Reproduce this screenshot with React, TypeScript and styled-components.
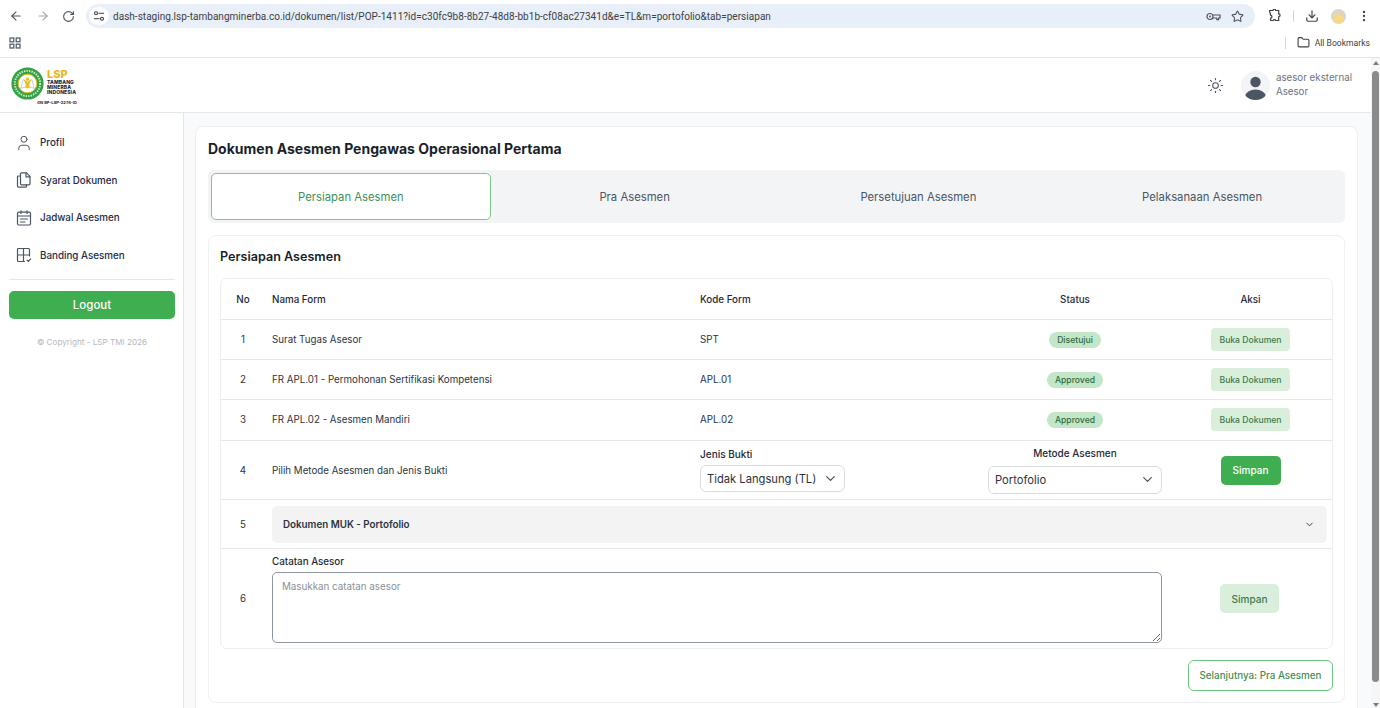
import React from "react";
import styled, { createGlobalStyle } from "styled-components";
import {
  ArrowLeft,
  ArrowRight,
  RotateCw,
  Star,
  Download,
  MoreVertical,
  Folder,
  Sun,
  ChevronDown,
  User,
} from "lucide-react";

const GlobalStyle = createGlobalStyle`
  html, body {
    margin: 0;
    height: 100%;
    overflow: hidden;
    background: #ffffff;
    font-family: Inter, "Noto Sans", sans-serif;
    color: #1f2937;
  }
  * { box-sizing: border-box; }
`;

const Shell = styled.div`
  width: 1380px;
  height: 708px;
  display: flex;
  flex-direction: column;
  overflow: hidden;
`;

/* browser chrome */
const Toolbar = styled.div`
  height: 34px;
  flex: none;
  display: flex;
  align-items: center;
  padding: 0 0 2px 9px;
  color: #4b5563;
`;

const NavIcons = styled.div`
  display: flex;
  align-items: center;
  gap: 12.5px;
  width: 77px;
  flex: none;
`;

const Omnibox = styled.div`
  width: 1169px;
  height: 24px;
  flex: none;
  border-radius: 12px;
  background: #e9eff9;
  display: flex;
  align-items: center;
  padding: 0 11px 0 3px;
`;

const SiteChip = styled.span`
  width: 20px;
  height: 18px;
  border-radius: 9px;
  background: #ffffff;
  display: flex;
  align-items: center;
  justify-content: center;
  margin-right: 4px;
`;

const UrlText = styled.span`
  flex: 1;
  font-family: Roboto, sans-serif;
  font-size: 10px;
  letter-spacing: 0.03px;
  color: #3c4043;
  white-space: nowrap;
`;

const OmniIcons = styled.div`
  display: flex;
  align-items: center;
  gap: 10px;
  color: #4b5563;
`;

const ToolIcons = styled.div`
  display: flex;
  align-items: center;
  margin-left: 12px;
  gap: 11.5px;
  color: #3c4043;
`;

const Separator = styled.span`
  width: 1px;
  height: 12px;
  background: #c9d7f0;
`;

const Profile = styled.span`
  width: 15px;
  height: 15px;
  border-radius: 50%;
  background: radial-gradient(circle at 50% 68%, #f4d98a 0 40%, #d9d5cc 44%);
`;

const BookmarksBar = styled.div`
  height: 24px;
  flex: none;
  display: flex;
  align-items: center;
  padding: 0 10px 6px 9px;
  border-bottom: 1px solid #e3e4e6;
  color: #4b5563;
`;

const AllBookmarks = styled.div`
  margin-left: auto;
  display: flex;
  align-items: center;
  gap: 5px;
  font-family: Roboto, sans-serif;
  font-size: 8.6px;
  color: #3c4043;
`;

const BookmarkSeparator = styled(Separator)`
  margin-right: 6px;
`;

/* page */
const Viewport = styled.div`
  flex: 1;
  min-height: 0;
  display: flex;
`;

const Page = styled.div`
  flex: 1;
  min-width: 0;
  display: flex;
  flex-direction: column;
`;

const ScrollTrack = styled.div`
  width: 9px;
  flex: none;
  background: #f6f6f6;
  display: flex;
  flex-direction: column;
  align-items: center;
  padding: 3px 0 1px;
`;

const ScrollThumb = styled.div`
  width: 7px;
  height: 611px;
  margin-top: 6px;
  flex: none;
  border-radius: 4px;
  background: #8b8b8b;
`;

const ScrollArrow = styled.span<{ $down?: boolean }>`
  width: 0;
  height: 0;
  flex: none;
  border-left: 3.5px solid transparent;
  border-right: 3.5px solid transparent;
  ${(p) =>
    p.$down
      ? "border-top: 4px solid #7d7d7d; margin-top: auto;"
      : "border-bottom: 4px solid #7d7d7d;"}
`;

const Header = styled.header`
  height: 55px;
  flex: none;
  display: flex;
  align-items: center;
  padding: 0 19px 0 11px;
  background: #ffffff;
  border-bottom: 1px solid #e5e7eb;
`;

const Logo = styled.div`
  position: relative;
  width: 68px;
  height: 40px;
  margin-top: 4px;
`;

const LogoMark = styled.svg`
  position: absolute;
  left: 0;
  top: 0;
`;

const LogoLsp = styled.span`
  position: absolute;
  left: 36px;
  top: 3px;
  font-size: 11px;
  line-height: 9px;
  font-weight: 800;
  color: #e3b91e;
`;

const LogoName = styled.span`
  position: absolute;
  left: 36px;
  top: 13px;
  font-size: 5px;
  line-height: 4.9px;
  font-weight: 800;
  letter-spacing: 0.1px;
  color: #1f2937;
`;

const LogoCode = styled.span`
  position: absolute;
  left: 26px;
  top: 33px;
  font-size: 4.1px;
  line-height: 5px;
  font-weight: 700;
  white-space: nowrap;
  color: #1f2937;
`;

const HeaderRight = styled.div`
  margin-left: auto;
  display: flex;
  align-items: center;
  color: #4b5563;
`;

const Avatar = styled.div`
  width: 29px;
  height: 29px;
  margin-left: 17px;
  margin-right: 6px;
  border-radius: 50%;
  background: #f3f4f6;
  overflow: hidden;
`;

const UserInfo = styled.div`
  display: flex;
  flex-direction: column;
  gap: 2px;
  font-size: 9.75px;
  line-height: 12px;
  color: #6b7280;
`;

const Body = styled.div`
  flex: 1;
  min-height: 0;
  display: flex;
`;

const Sidebar = styled.aside`
  width: 184px;
  flex: none;
  background: #ffffff;
  border-right: 1px solid #e5e7eb;
  padding: 11.2px 8px 0 9px;
  display: flex;
  flex-direction: column;
`;

const NavItem = styled.div`
  height: 37.5px;
  display: flex;
  align-items: center;
  gap: 7px;
  padding-left: 6px;
  font-size: 9.8px;
  font-weight: 500;
  color: #1e2a44;
  svg {
    color: #4b5563;
    flex: none;
  }
`;

const SideRule = styled.div`
  height: 1px;
  background: #e5e7eb;
  margin: 4.5px 0 11px;
`;

const LogoutButton = styled.button`
  height: 28px;
  flex: none;
  border: none;
  border-radius: 5px;
  background: #3fae50;
  color: #ffffff;
  font-family: inherit;
  font-size: 11.5px;
  font-weight: 500;
`;

const Copyright = styled.p`
  margin: 18px 0 0;
  text-align: center;
  font-size: 8.15px;
  color: #b4b8bf;
`;

const Main = styled.main`
  flex: 1;
  min-width: 0;
  overflow: hidden;
  background: #f9fafb;
  padding: 13px 13px 0 11px;
`;

const Card = styled.section`
  background: #ffffff;
  border: 1px solid #eceef1;
  border-radius: 8px;
  padding: 13px 12px 12px;
`;

const Title = styled.h1`
  margin: 0 0 12px;
  font-size: 14px;
  line-height: 18px;
  font-weight: 700;
  color: #1a1f2b;
`;

const TabBar = styled.div`
  height: 53px;
  display: grid;
  grid-template-columns: repeat(4, 1fr);
  gap: 4px;
  padding: 3px;
  background: #f3f4f6;
  border-radius: 6px;
`;

const Tab = styled.div<{ $active?: boolean }>`
  display: flex;
  align-items: center;
  justify-content: center;
  font-size: 11.3px;
  border-radius: 5px;
  color: ${(p) => (p.$active ? "#3f8f55" : "#4b5563")};
  background: ${(p) => (p.$active ? "#ffffff" : "transparent")};
  border: 1px solid ${(p) => (p.$active ? "#7cc98c" : "transparent")};
`;

const Panel = styled.div`
  margin-top: 12px;
  background: #ffffff;
  border: 1px solid #f0f1f3;
  border-radius: 8px;
  padding: 13px 11px 11px;
`;

const PanelTitle = styled.h2`
  margin: 0 0 13px;
  font-size: 12.6px;
  line-height: 16px;
  font-weight: 600;
  color: #1a1f2b;
`;

const FormTable = styled.div`
  border: 1px solid #eceef1;
  border-radius: 7px;
  font-size: 9.75px;
  color: #2b3340;
`;

const Row = styled.div<{ $h: number; $last?: boolean; $raise?: boolean }>`
  height: ${(p) => p.$h}px;
  display: grid;
  grid-template-columns: 44px 428px 288px 188px 1fr;
  align-items: center;
  padding-bottom: ${(p) => (p.$raise ? "1px" : "0")};
  border-bottom: ${(p) => (p.$last ? "none" : "1px solid #e5e7eb")};
`;

const SpanRow = styled(Row)`
  grid-template-columns: 44px 1fr;
`;

const NoteRow = styled(Row)`
  grid-template-columns: 44px 904px 1fr;
`;

const Cell = styled.div<{ $center?: boolean }>`
  padding: 0 7px;
  min-width: 0;
  text-align: ${(p) => (p.$center ? "center" : "left")};
`;

const HeadCell = styled(Cell)`
  font-size: 9.8px;
  font-weight: 500;
  color: #1f2937;
`;

const Badge = styled.span`
  display: inline-block;
  height: 16px;
  line-height: 16px;
  padding: 0 8px;
  border-radius: 8px;
  background: #c3e6c8;
  color: #2f6b3c;
  font-size: 8.6px;
  font-weight: 500;
`;

const OpenButton = styled.button`
  height: 23px;
  width: 79px;
  padding: 0;
  border: none;
  border-radius: 4px;
  background: #d9efdc;
  color: #3b7a4b;
  font-family: inherit;
  font-size: 8.6px;
  font-weight: 500;
`;

const FieldLabel = styled.div<{ $center?: boolean }>`
  font-size: 10px;
  line-height: 12px;
  font-weight: 500;
  color: #1f2937;
  margin-bottom: ${(p) => (p.$center ? "7px" : "5px")};
  text-align: ${(p) => (p.$center ? "center" : "left")};
`;

const SelectBox = styled.div<{ $w: number; $h: number }>`
  width: ${(p) => p.$w}px;
  height: ${(p) => p.$h}px;
  display: flex;
  align-items: center;
  justify-content: space-between;
  padding: 0 6px;
  background: #ffffff;
  border: 1px solid #d9dce1;
  border-radius: 6px;
  font-size: 11.2px;
  color: #2b3340;
  svg {
    color: #4b5563;
  }
`;

const SaveButton = styled.button<{ $soft?: boolean }>`
  width: ${(p) => (p.$soft ? "59px" : "60px")};
  height: 29px;
  padding: 0;
  margin-right: ${(p) => (p.$soft ? "2px" : "0")};
  border: none;
  border-radius: 5px;
  font-family: inherit;
  font-size: 10px;
  font-weight: 500;
  color: ${(p) => (p.$soft ? "#3b7a4b" : "#ffffff")};
  background: ${(p) => (p.$soft ? "#d9efdc" : "#3fae50")};
`;

const Accordion = styled.div`
  height: 37px;
  margin-right: 5px;
  margin-left: 7px;
  padding: 0 12px 0 11px;
  display: flex;
  align-items: center;
  justify-content: space-between;
  background: #f3f3f4;
  border-radius: 5px;
  font-size: 9.8px;
  font-weight: 600;
  color: #2b3340;
`;

const NoteField = styled.div`
  padding: 2px 0 0 7px;
`;

const NoteLabel = styled.div`
  font-size: 9.8px;
  line-height: 12px;
  font-weight: 500;
  color: #1f2937;
  margin-bottom: 4px;
`;

const NoteArea = styled.textarea`
  display: block;
  width: 890px;
  height: 71px;
  padding: 8px 9px;
  border: 1px solid #8f95a1;
  border-radius: 5px;
  font-family: inherit;
  font-size: 9.8px;
  background: #ffffff;
  &::placeholder {
    color: #8b9099;
  }
`;

const Footer = styled.div`
  display: flex;
  justify-content: flex-end;
  margin-top: 11px;
`;

const NextButton = styled.button`
  width: 145px;
  height: 31px;
  padding: 0;
  background: #ffffff;
  border: 1px solid #6cc77e;
  border-radius: 6px;
  font-family: inherit;
  font-size: 9.8px;
  font-weight: 500;
  color: #3f8f55;
`;

const TuneIcon = () => (
  <svg width="12" height="12" viewBox="0 0 12 12" fill="none" stroke="#3c4043" strokeWidth="1.1">
    <circle cx="3" cy="3.2" r="1.5" />
    <path d="M5.5 3.2H11M1 8.8h5.5" />
    <circle cx="9" cy="8.8" r="1.5" />
  </svg>
);

const AppsIcon = () => (
  <svg width="12" height="12" viewBox="0 0 12 12" fill="none" stroke="#4b5563" strokeWidth="1.2">
    <rect x="1" y="1" width="3.8" height="3.8" />
    <rect x="7.2" y="1" width="3.8" height="3.8" />
    <rect x="1" y="7.2" width="3.8" height="3.8" />
    <rect x="7.2" y="7.2" width="3.8" height="3.8" />
  </svg>
);

const KeyIcon = () => (
  <svg width="15" height="13" viewBox="0 0 15 13" fill="none" stroke="#4b5563" strokeWidth="1.2">
    <circle cx="4" cy="6.5" r="3" />
    <circle cx="4" cy="6.5" r="0.9" fill="#4b5563" stroke="none" />
    <path d="M7 5h7v3h-1.4v1.6h-1.8V8H7" />
  </svg>
);

const ExtensionIcon = () => (
  <svg width="14" height="14" viewBox="0 0 14 14" fill="none" stroke="#3c4043" strokeWidth="1.2" strokeLinejoin="round">
    <path d="M2.5 1.5h3.6a1.3 1.3 0 0 1 2.6 0h3v3.4a1.4 1.4 0 0 1 0 2.8v3.8h-3a1.4 1.4 0 0 0-2.6 0H3.6v-2.4a1.4 1.4 0 0 0 0-2.8z" />
  </svg>
);

const AvatarFigure = () => (
  <svg width="29" height="29" viewBox="0 0 29 29" fill="#4b5563">
    <circle cx="14.5" cy="11" r="5.2" />
    <ellipse cx="14.5" cy="25" rx="10" ry="6.4" />
  </svg>
);

const DocsIcon = () => (
  <svg width="18" height="18" viewBox="0 0 18 18" fill="none" stroke="#4b5563" strokeWidth="1.2" strokeLinejoin="round" strokeLinecap="round">
    <path d="M6.5 1.8h5l3.5 3.6v7.4a1 1 0 0 1-1 1H6.5a1 1 0 0 1-1-1V2.8a1 1 0 0 1 1-1z" />
    <path d="M11 1.8v4h4" />
    <path d="M5.5 5H3.5a1 1 0 0 0-1 1v9.2a1 1 0 0 0 1 1h7a1 1 0 0 0 1-1V13.8" />
  </svg>
);

const ScheduleIcon = () => (
  <svg width="18" height="18" viewBox="0 0 18 18" fill="none" stroke="#4b5563" strokeWidth="1.2" strokeLinecap="round">
    <rect x="2.5" y="3.2" width="13" height="12.8" rx="1.2" />
    <path d="M2.5 7h13M6 1.8v2.6M12 1.8v2.6M5.5 10h7M5.5 13h4.5" />
  </svg>
);

const BandingIcon = () => (
  <svg width="18" height="18" viewBox="0 0 18 18" fill="none" stroke="#4b5563" strokeWidth="1.2" strokeLinecap="round">
    <path d="M9.5 15.5H3.5a1 1 0 0 1-1-1v-11a1 1 0 0 1 1-1h10a1 1 0 0 1 1 1V10" />
    <path d="M2.5 9h12M8.5 2.5v13" />
    <path d="M12 14.2l1.3 1.3 2.4-2.6" />
  </svg>
);

const LogoSvg = () => (
  <LogoMark width="33" height="33" viewBox="0 0 34 34">
    <circle cx="17" cy="17" r="16.6" fill="#35a24a" />
    <circle cx="17" cy="17" r="13" fill="none" stroke="#d8efc4" strokeWidth="2" strokeDasharray="1.4 1.2" />
    <circle cx="17" cy="17" r="9.6" fill="#ffffff" stroke="#e3b91e" strokeWidth="1" />
    <path d="M10 22 L12.5 13 L17 16 L21.5 13 L24 22 L17 20 Z" fill="none" stroke="#9fb6d8" strokeWidth="0.7" />
    <circle cx="17" cy="12.6" r="1.7" fill="#e8c21f" />
    <path d="M13 12.5 L17 15.4 L21 12.5 L19 17.6 L19 22 L15 22 L15 17.6 Z" fill="#e8c21f" />
  </LogoMark>
);

const rows = [
  { no: 1, name: "Surat Tugas Asesor", code: "SPT", status: "Disetujui", h: 40 },
  { no: 2, name: "FR APL.01 - Permohonan Sertifikasi Kompetensi", code: "APL.01", status: "Approved", h: 40 },
  { no: 3, name: "FR APL.02 - Asesmen Mandiri", code: "APL.02", status: "Approved", h: 41 },
];

const tabs = ["Persiapan Asesmen", "Pra Asesmen", "Persetujuan Asesmen", "Pelaksanaan Asesmen"];

export default function App() {
  return (
    <Shell>
      <GlobalStyle />
      <Toolbar>
        <NavIcons>
          <ArrowLeft size={14} />
          <ArrowRight size={14} color="#a8abb0" />
          <RotateCw size={13} />
        </NavIcons>
        <Omnibox>
          <SiteChip>
            <TuneIcon />
          </SiteChip>
          <UrlText>
            dash-staging.lsp-tambangminerba.co.id/dokumen/list/POP-1411?id=c30fc9b8-8b27-48d8-bb1b-cf08ac27341d&e=TL&m=portofolio&tab=persiapan
          </UrlText>
          <OmniIcons>
            <KeyIcon />
            <Star size={13} />
          </OmniIcons>
        </Omnibox>
        <ToolIcons>
          <ExtensionIcon />
          <Separator />
          <Download size={14} />
          <Profile />
          <MoreVertical size={14} />
        </ToolIcons>
      </Toolbar>
      <BookmarksBar>
        <AppsIcon />
        <AllBookmarks>
          <BookmarkSeparator />
          <Folder size={13} />
          All Bookmarks
        </AllBookmarks>
      </BookmarksBar>

      <Viewport>
        <Page>
          <Header>
            <Logo>
              <LogoSvg />
              <LogoLsp>LSP</LogoLsp>
              <LogoName>
                TAMBANG
                <br />
                MINERBA
                <br />
                INDONESIA
              </LogoName>
              <LogoCode>GN BP-LSP-2276-ID</LogoCode>
            </Logo>
            <HeaderRight>
              <Sun size={17} strokeWidth={1.5} />
              <Avatar>
                <AvatarFigure />
              </Avatar>
              <UserInfo>
                <span>asesor eksternal</span>
                <span>Asesor</span>
              </UserInfo>
            </HeaderRight>
          </Header>
          <Body>
            <Sidebar>
              <NavItem>
                <User size={18} strokeWidth={1.3} />
                Profil
              </NavItem>
              <NavItem>
                <DocsIcon />
                Syarat Dokumen
              </NavItem>
              <NavItem>
                <ScheduleIcon />
                Jadwal Asesmen
              </NavItem>
              <NavItem>
                <BandingIcon />
                Banding Asesmen
              </NavItem>
              <SideRule />
              <LogoutButton>Logout</LogoutButton>
              <Copyright>© Copyright - LSP TMI 2026</Copyright>
            </Sidebar>
            <Main>
              <Card>
                <Title>Dokumen Asesmen Pengawas Operasional Pertama</Title>
                <TabBar>
                  {tabs.map((t, i) => (
                    <Tab key={t} $active={i === 0}>
                      {t}
                    </Tab>
                  ))}
                </TabBar>
                <Panel>
                  <PanelTitle>Persiapan Asesmen</PanelTitle>
                  <FormTable>
                    <Row $h={41}>
                      <HeadCell $center>No</HeadCell>
                      <HeadCell>Nama Form</HeadCell>
                      <HeadCell>Kode Form</HeadCell>
                      <HeadCell $center>Status</HeadCell>
                      <HeadCell $center>Aksi</HeadCell>
                    </Row>
                    {rows.map((r) => (
                      <Row key={r.no} $h={r.h} $raise={r.no === 3}>
                        <Cell $center>{r.no}</Cell>
                        <Cell>{r.name}</Cell>
                        <Cell>{r.code}</Cell>
                        <Cell $center>
                          <Badge>{r.status}</Badge>
                        </Cell>
                        <Cell $center>
                          <OpenButton>Buka Dokumen</OpenButton>
                        </Cell>
                      </Row>
                    ))}
                    <Row $h={59}>
                      <Cell $center>4</Cell>
                      <Cell>Pilih Metode Asesmen dan Jenis Bukti</Cell>
                      <Cell>
                        <FieldLabel>Jenis Bukti</FieldLabel>
                        <SelectBox $w={145} $h={27}>
                          Tidak Langsung (TL)
                          <ChevronDown size={15} />
                        </SelectBox>
                      </Cell>
                      <Cell>
                        <FieldLabel $center>Metode Asesmen</FieldLabel>
                        <SelectBox $w={174} $h={28}>
                          Portofolio
                          <ChevronDown size={15} />
                        </SelectBox>
                      </Cell>
                      <Cell $center>
                        <SaveButton>Simpan</SaveButton>
                      </Cell>
                    </Row>
                    <SpanRow $h={49}>
                      <Cell $center>5</Cell>
                      <Accordion>
                        Dokumen MUK - Portofolio
                        <ChevronDown size={11} />
                      </Accordion>
                    </SpanRow>
                    <NoteRow $h={99} $last>
                      <Cell $center>6</Cell>
                      <NoteField>
                        <NoteLabel>Catatan Asesor</NoteLabel>
                        <NoteArea placeholder="Masukkan catatan asesor" />
                      </NoteField>
                      <Cell $center>
                        <SaveButton $soft>Simpan</SaveButton>
                      </Cell>
                    </NoteRow>
                  </FormTable>
                  <Footer>
                    <NextButton>Selanjutnya: Pra Asesmen</NextButton>
                  </Footer>
                </Panel>
              </Card>
            </Main>
          </Body>
        </Page>
        <ScrollTrack>
          <ScrollArrow />
          <ScrollThumb />
          <ScrollArrow $down />
        </ScrollTrack>
      </Viewport>
    </Shell>
  );
}
